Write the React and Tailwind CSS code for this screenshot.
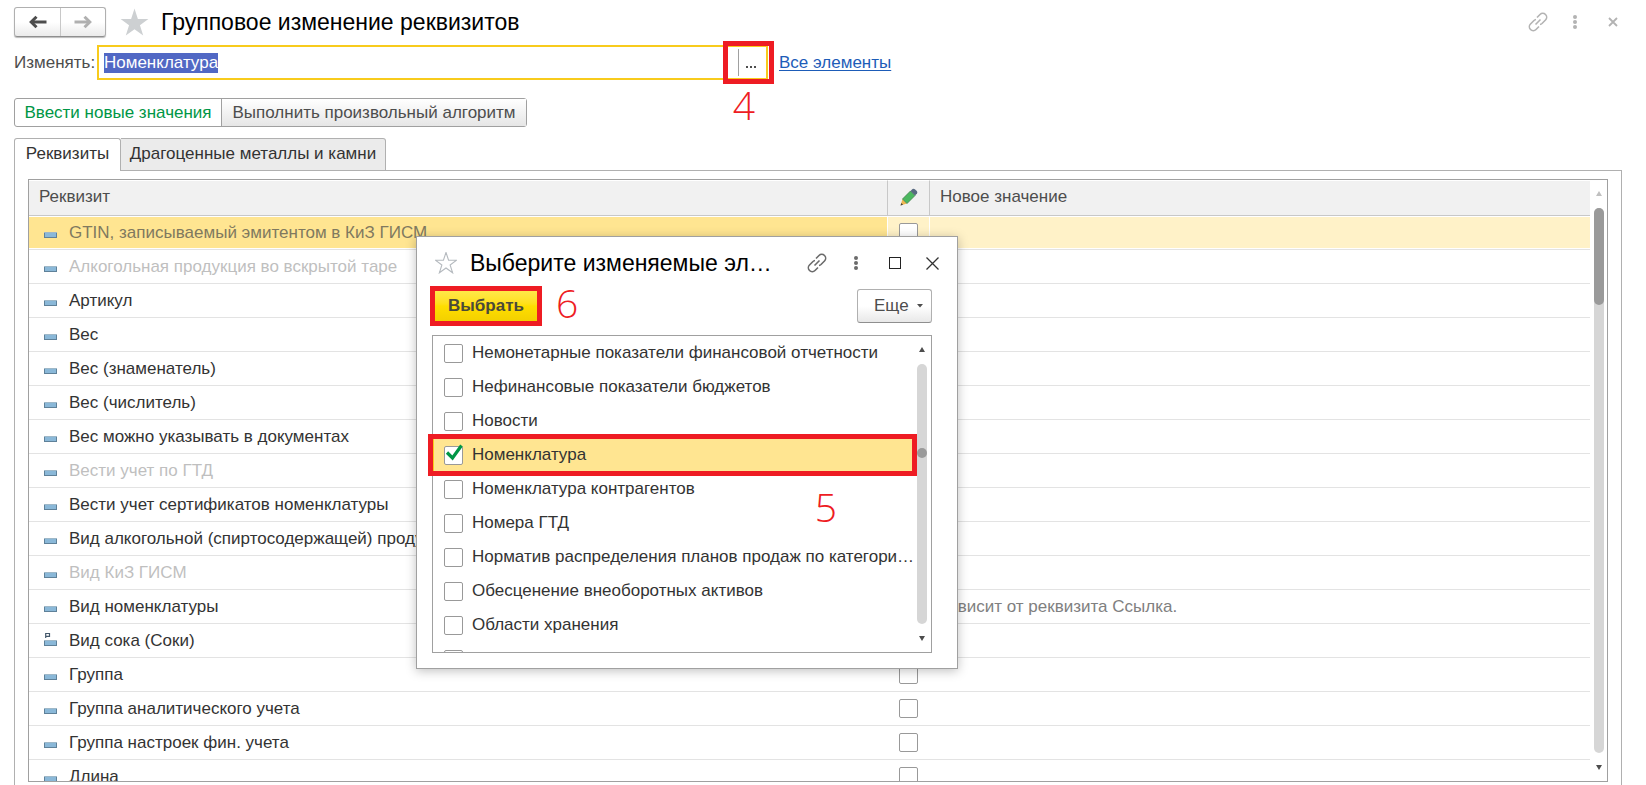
import { useEffect, useRef } from 'react';
import { clsx } from 'clsx';

const attributes = [
    { name: 'GTIN, записываемый эмитентом в КиЗ ГИСМ', selected: true },
    { name: 'Алкогольная продукция во вскрытой таре', disabled: true },
    { name: 'Артикул' },
    { name: 'Вес' },
    { name: 'Вес (знаменатель)' },
    { name: 'Вес (числитель)' },
    { name: 'Вес можно указывать в документах' },
    { name: 'Вести учет по ГТД', disabled: true },
    { name: 'Вести учет сертификатов номенклатуры' },
    { name: 'Вид алкогольной (спиртосодержащей) продукции' },
    { name: 'Вид КиЗ ГИСМ', disabled: true },
    { name: 'Вид номенклатуры', value: 'Зависит от реквизита Ссылка.' },
    { name: 'Вид сока (Соки)', extra: true },
    { name: 'Группа' },
    { name: 'Группа аналитического учета' },
    { name: 'Группа настроек фин. учета' },
    { name: 'Длина' },
];

const elements = [
    { name: 'Немонетарные показатели финансовой отчетности' },
    { name: 'Нефинансовые показатели бюджетов' },
    { name: 'Новости' },
    { name: 'Номенклатура', checked: true },
    { name: 'Номенклатура контрагентов' },
    { name: 'Номера ГТД' },
    { name: 'Норматив распределения планов продаж по категори…' },
    { name: 'Обесценение внеоборотных активов' },
    { name: 'Области хранения' },
    { name: '' },
];

export default function App() {
    const inputRef = useRef(null);

    useEffect(() => {
        inputRef.current.focus();
        inputRef.current.select();
    }, []);

    return (
        <div className="relative flex h-screen w-full flex-col overflow-hidden bg-white px-[14px] pt-[7px] font-['Liberation_Sans',Arial,sans-serif] text-[17px] leading-5 text-[#4d4d4d]">
            {/* Title bar */}
            <div className="flex h-[30px] w-full shrink-0 items-center">
                <div className="flex h-[30px] shrink-0 rounded-[3px] border border-[#b0b0b0] border-b-[#8f8f8f] bg-linear-to-b from-white from-50% to-[#ebebeb] shadow-[0_1px_1px_#bbb]">
                    <button aria-label="Назад" className="flex w-[46px] items-center justify-center border-r border-[#c8c8c8]">
                        <ArrowIcon className="text-[#4d4d4d]" />
                    </button>
                    <button aria-label="Вперед" className="flex w-[44px] items-center justify-center">
                        <ArrowIcon className="rotate-180 text-[#b0b0b0]" />
                    </button>
                </div>
                <StarIcon className="ml-[13px] h-[29px] w-[31px] shrink-0 fill-[#cdd0d2]" />
                <h1 className="ml-[11px] grow text-[23px] leading-7 text-black">Групповое изменение реквизитов</h1>
                <div className="flex shrink-0 items-center text-[#b3b3b3]">
                    <button aria-label="Ссылка"><LinkIcon /></button>
                    <button aria-label="Меню" className="ml-[25px]"><DotsIcon /></button>
                    <button aria-label="Закрыть" className="mr-[14px] ml-[31px]">
                        <svg viewBox="0 0 10 10" className="size-[10px]" fill="none" stroke="currentColor" strokeWidth="1.8">
                            <path d="M1 1l8 8M9 1l-8 8" />
                        </svg>
                    </button>
                </div>
            </div>

            {/* Object picker */}
            <div className="mt-2 flex h-[35px] shrink-0 items-center">
                <label htmlFor="target" className="w-[83px] shrink-0">Изменять:</label>
                <div className="relative flex h-[35px] w-[671px] items-center border-2 border-[#f8cb1c]">
                    <input
                        id="target"
                        ref={inputRef}
                        defaultValue="Номенклатура"
                        className="min-w-0 grow pl-[5px] outline-none selection:bg-[#5168c4] selection:text-white"
                    />
                    <button aria-label="Выбрать объект" className="flex h-[27px] w-[28px] items-center justify-center gap-[2px] border-l border-[#a0a0a0] pt-[9px] pr-1">
                        <i className="size-[2px] bg-[#4d4d4d]" />
                        <i className="size-[2px] bg-[#4d4d4d]" />
                        <i className="size-[2px] bg-[#4d4d4d]" />
                    </button>
                    <div className="pointer-events-none absolute -inset-y-[6px] -right-[8px] w-[51px] border-5 border-[#ee1c23]" />
                    <Step className="top-[36px] right-[11px]">4</Step>
                </div>
                <a href="#all" className="ml-[11px] text-[#1d5cb8] underline decoration-1 underline-offset-2">Все элементы</a>
            </div>

            {/* Mode switch */}
            <div className="mt-[18px] flex h-[29px] shrink-0 self-start rounded-[3px] border border-[#a0a0a0]">
                <button className="w-[207px] border-r border-[#a0a0a0] whitespace-nowrap text-[#009646]">Ввести новые значения</button>
                <button className="w-[304px] bg-linear-to-b from-white to-[#e6e6e6] whitespace-nowrap">Выполнить произвольный алгоритм</button>
            </div>

            {/* Tabs */}
            <div role="tablist" className="relative mt-[11px] flex h-[33px] shrink-0 text-[#333]">
                <button role="tab" aria-selected="true" className="w-[107px] rounded-t-[3px] border border-b-0 border-[#b0b0b0] bg-white pb-[2px]">Реквизиты</button>
                <button role="tab" aria-selected="false" className="w-[265px] rounded-tr-[3px] border border-l-0 border-[#b0b0b0] bg-[#ebebeb] pb-[2px] whitespace-nowrap">Драгоценные металлы и камни</button>
            </div>

            <main className="-mt-px mr-[10px] flex min-h-0 grow flex-col border-x border-[#b0b0b0] pb-[3px]">
                <div className="ml-[105px] border-t border-[#b0b0b0]" />
                <div className="mx-[13px] mt-[8px] flex min-h-0 grow overflow-hidden border border-[#a0a0a0]">
                    <div className="min-w-0 grow">
                        <table className="w-full table-fixed border-separate border-spacing-0">
                            <colgroup>
                                <col />
                                <col className="w-[42px]" />
                                <col className="w-[660px]" />
                            </colgroup>
                            <thead>
                                <tr className="h-[36px] text-left">
                                    <th className="border-t border-r border-b border-white border-r-[#c8c8c8] border-b-[#c8c8c8] bg-[#f1f1f1] pb-[2px] pl-[10px] font-normal">Реквизит</th>
                                    <th className="border-t border-r border-b border-white border-r-[#c8c8c8] border-b-[#c8c8c8] bg-[#f1f1f1] pb-[2px] font-normal" aria-label="Изменять">
                                        <PencilIcon />
                                    </th>
                                    <th className="border-t border-b border-white border-b-[#c8c8c8] bg-[#f1f1f1] pb-[2px] pl-[10px] font-normal">Новое значение</th>
                                </tr>
                            </thead>
                            <tbody>
                                {attributes.map(item => (
                                    <AttributeRow key={item.name} item={item} />
                                ))}
                            </tbody>
                        </table>
                    </div>
                    <div className="flex w-[17px] shrink-0 flex-col items-center pt-[11px] pb-[11px]">
                        <TriangleIcon className="fill-[#c0c0c0]" />
                        <div className="mt-[12px] mb-[12px] w-[10px] grow rounded-full bg-[#d6d6d6]">
                            <div className="h-[97px] rounded-full bg-[#9a9a9a]" />
                        </div>
                        <TriangleIcon className="rotate-180 fill-[#4d4d4d]" />
                    </div>
                </div>
            </main>

            <SelectDialog />
        </div>
    );
}

function AttributeRow({ item }) {
    const { name, value, selected, disabled, extra } = item;

    return (
        <tr className="h-[34px]">
            <td className={clsx('border-b border-[#e3e3e3] p-0 whitespace-nowrap', selected && 'border-r border-r-white')}>
                <div className={clsx(
                    'flex h-[31px] items-center pl-[15px]',
                    selected && 'bg-[#ffe591] text-[#80795f]',
                    disabled && 'text-[#bfbfbf]',
                    !selected && !disabled && 'text-[#333]'
                )}>
                    <AttributeIcon extra={extra} />
                    <span className="ml-[12px]">{name}</span>
                </div>
            </td>
            <td className={clsx('border-b border-[#e3e3e3] p-0', selected && 'border-r border-r-white')}>
                <div className={clsx('flex h-[31px] items-center pl-[11px]', selected && 'bg-[#fff2c8]')}>
                    <input type="checkbox" aria-label={name} className="size-[19px] appearance-none rounded-[2px] border border-[#999] bg-white" />
                </div>
            </td>
            <td className="border-b border-[#e3e3e3] p-0">
                <div className={clsx('flex h-[31px] items-center pl-[8px] text-[#808080]', selected && 'bg-[#fff2c8]')}>{value}</div>
            </td>
        </tr>
    );
}

function SelectDialog() {
    return (
        <section role="dialog" aria-label="Выбор элементов" className="absolute top-[236px] left-[416px] w-[542px] border border-[#a0a0a0] bg-white px-[15px] pb-[15px] shadow-[0_2px_10px_rgba(0,0,0,0.25)]">
            <div className="flex h-[52px] items-center">
                <StarIcon className="ml-[3px] size-[22px] fill-white stroke-[#b5babf] stroke-[1.2]" />
                <h2 className="ml-[13px] text-[23px] leading-7 whitespace-nowrap text-black">Выберите изменяемые эл…</h2>
                <div className="ml-auto flex items-center text-[#6b6b6b]">
                    <button aria-label="Ссылка"><LinkIcon /></button>
                    <button aria-label="Меню" className="ml-[27px]"><DotsIcon /></button>
                    <button aria-label="Развернуть" className="ml-[31px] size-[12px] border border-[#222]" />
                    <button aria-label="Закрыть" className="mr-[3px] ml-[25px] text-[#333]">
                        <svg viewBox="0 0 13 13" className="size-[13px]" fill="none" stroke="currentColor" strokeWidth="1.3">
                            <path d="M.5 .5l12 12M12.5 .5l-12 12" />
                        </svg>
                    </button>
                </div>
            </div>

            <div className="relative mr-[10px] ml-[2px] flex h-[34px] items-center justify-between">
                <div className="relative">
                    <button className="h-[32px] w-[104px] bg-linear-to-b from-[#ffe94a] via-[#ffde00] to-[#f2cf00] font-bold text-[#4a4a3a]">Выбрать</button>
                    <div className="pointer-events-none absolute -inset-[4px] border-5 border-[#ee1c23]" />
                </div>
                <Step className="top-[-8px] left-[122px]">6</Step>
                <button className="flex h-[34px] w-[75px] items-center rounded-[3px] border border-[#b0b0b0] border-b-[#8f8f8f] bg-linear-to-b from-white from-50% to-[#e8e8e8] pl-[16px]">
                    Еще
                    <svg viewBox="0 0 6 4" className="ml-[8px] h-[4px] w-[6px] fill-[#4d4d4d]"><path d="M0 0h6L3 3.5z" /></svg>
                </button>
            </div>

            <div className="relative mt-[12px] mr-[10px] h-[318px] border border-[#a0a0a0]">
                <div className="flex h-full overflow-hidden">
                    <ul className="min-w-0 grow">
                        {elements.map((item, i) => (
                            <li key={i} className={clsx('h-[34px] p-px', item.checked && 'bg-[#ffe591]')}>
                                <label className={clsx('flex h-full items-center pl-[10px] text-[#333]', item.checked && 'outline-2 outline-[#f8cb1c]')}>
                                    <span className="relative flex shrink-0">
                                        <input type="checkbox" defaultChecked={item.checked} className="size-[19px] appearance-none rounded-[2px] border border-[#999] bg-white" />
                                        {item.checked && (
                                            <svg viewBox="0 0 19 19" className="absolute inset-0 overflow-visible" fill="none" stroke="#009646" strokeWidth="3.2">
                                                <path d="M3 6.500l5.500 5.500L17.500-.5" />
                                            </svg>
                                        )}
                                    </span>
                                    <span className="ml-[9px] whitespace-nowrap">{item.name}</span>
                                </label>
                            </li>
                        ))}
                    </ul>
                    <div className="flex w-[14px] shrink-0 flex-col items-start pt-[11px] pb-[11px]">
                        <TriangleIcon className="ml-[2px] fill-[#4d4d4d]" />
                        <div className="mt-[12px] mb-[12px] flex w-[10px] grow rounded-full bg-[#d6d6d6] pt-[84px]">
                            <div className="size-[10px] rounded-full bg-[#9a9a9a]" />
                        </div>
                        <TriangleIcon className="ml-[2px] rotate-180 fill-[#4d4d4d]" />
                    </div>
                </div>
                <div className="pointer-events-none absolute top-[98px] right-[14px] -left-[5px] h-[42px] border-5 border-[#ee1c23]" />
                <Step className="top-[149px] right-[94px]">5</Step>
            </div>
        </section>
    );
}

function Step({ className, children }) {
    return (
        <span className={clsx("pointer-events-none absolute font-['Open_Sans','Noto_Sans',sans-serif] text-[39px] leading-[44px] font-light text-[#ee1c23]", className)}>
            {children}
        </span>
    );
}

function ArrowIcon({ className }) {
    return (
        <svg viewBox="0 0 18 14" className={clsx('h-[14px] w-[18px]', className)} fill="none" stroke="currentColor" strokeWidth="3">
            <path d="M2 7h15.500" />
            <path d="M7.500 1.800L2.200 7l5.300 5.200" />
        </svg>
    );
}

function StarIcon({ className }) {
    return (
        <svg viewBox="0 0 24 24" className={className}>
            <path d="M12 .5l2.800 8.500h8.700l-7 5.200 2.700 8.500-7.200-5.200-7.200 5.200 2.700-8.500L.5 9h8.700z" />
        </svg>
    );
}

function LinkIcon() {
    return (
        <svg viewBox="0 0 20 20" className="size-[20px]" fill="none" stroke="currentColor" strokeWidth="1.6">
            <path d="M9 5.500l3-3a3.800 3.800 0 0 1 5.500 5.500l-3.500 3.500a3.800 3.800 0 0 1-2 1" />
            <path d="M11 14.500l-3 3a3.800 3.800 0 0 1-5.500-5.500L6 8.500a3.800 3.800 0 0 1 2-1" />
            <path d="M7.500 12.500l5-5" />
        </svg>
    );
}

function DotsIcon() {
    return (
        <svg viewBox="0 0 4 14" className="h-[14px] w-[4px]" fill="currentColor">
            <circle cx="2" cy="2" r="2" />
            <circle cx="2" cy="7" r="2" />
            <circle cx="2" cy="12" r="2" />
        </svg>
    );
}

function TriangleIcon({ className }) {
    return (
        <svg viewBox="0 0 6 5" className={clsx('h-[5px] w-[6px] shrink-0', className)}>
            <path d="M3 0l3 5H0z" />
        </svg>
    );
}

function AttributeIcon({ extra }) {
    return (
        <svg viewBox="0 0 13 18" className="h-[18px] w-[13px] shrink-0">
            <rect x=".5" y="8.500" width="12" height="5" fill="#8ab8d8" stroke="#5f8199" />
            <path d="M0 8.500h13" stroke="#9fb8c8" />
            {extra && <path d="M1.700 6V1.500h3.800v2.800H2" fill="none" stroke="#44586b" strokeWidth="1.200" />}
        </svg>
    );
}

function PencilIcon() {
    return (
        <svg viewBox="0 0 18 18" className="mx-auto size-[18px]">
            <path d="M.5 17.500l2-6.500 4.500 4.500z" fill="#f0b64f" />
            <path d="M.5 17.500l.8-2.600 1.800 1.800z" fill="#444" />
            <path d="M2.500 11l8-8 4.500 4.500-8 8z" fill="#4bb85f" stroke="#3d7d49" strokeWidth=".8" />
            <path d="M10.500 3l2-2q1.200-.8 2.400.2l1.900 1.900q1 1.200.2 2.400l-2 2z" fill="#586a80" />
        </svg>
    );
}
